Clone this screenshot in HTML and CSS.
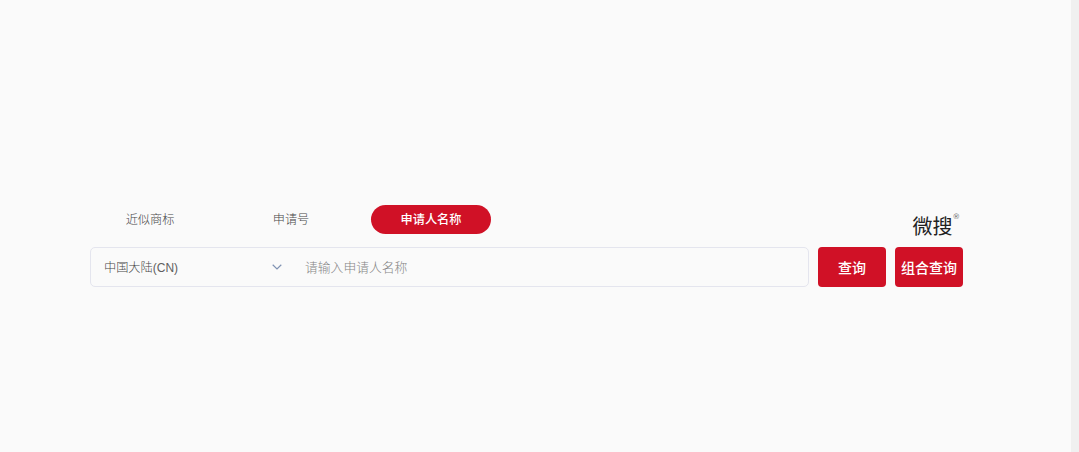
FILE: index.html
```html
<!DOCTYPE html>
<html lang="zh-CN">
<head>
    <meta charset="UTF-8">
    <meta name="viewport" content="width=device-width, initial-scale=1.0">
    <title>微搜</title>
    <link rel="stylesheet" href="styles.css">
</head>
<body>

<div class="page">
    <div class="search">
        <div class="search-top">
            <div class="tabs">
                <div class="tab">近似商标</div>
                <div class="tab">申请号</div>
                <div class="tab active">申请人名称</div>
            </div>
            <div class="logo">微搜<span class="reg">®</span></div>
        </div>

        <div class="search-row">
            <div class="search-box">
                <div class="country">
                    <div>中国大陆<span class="code">(CN)</span></div>
                    <svg class="arrow" width="10" height="6" viewBox="0 0 10 6">
                        <path d="M0.7 0.7L5 4.9L9.3 0.7" fill="none" stroke="#8093b3" stroke-width="1.2"/>
                    </svg>
                </div>
                <input class="keyword" type="text" placeholder="请输入申请人名称">
            </div>
            <button class="btn">查询</button>
            <button class="btn">组合查询</button>
        </div>
    </div>
    <div class="scrollbar"></div>
</div>

</body>
</html>
```

FILE: styles.css
```css
* {
    box-sizing: border-box;
}

body {
    margin: 0;
    font-family: "Liberation Sans", "Noto Sans CJK SC", sans-serif;
    font-weight: 300;
    background-color: #fafafa;
}

.page {
    display: flex;
    justify-content: space-between;
    height: 100vh;
    overflow: hidden;
}

.search {
    width: 873px;
    margin-left: 90px;
    padding-top: 205px;
}

.scrollbar {
    width: 8px;
    background-color: #f0f0f0;
}

.search-top {
    display: flex;
    justify-content: space-between;
    height: 42px;
}

.tabs {
    display: flex;
    gap: 20px;
    padding-left: 1px;
}

.tab {
    width: 120px;
    height: 28.5px;
    line-height: 30px;
    border-radius: 15px;
    font-size: 12.2px;
    color: #484848;
    text-align: center;
}

.tab:first-child {
    padding-right: 2px;
}

.tab.active {
    background-color: #d01126;
    color: #fff;
    font-weight: 500;
}

.logo {
    display: flex;
    align-items: flex-start;
    padding-right: 3px;
    font-size: 20px;
    font-weight: 400;
    line-height: 44px;
    color: #222;
}

.reg {
    font-family: "DejaVu Sans", sans-serif;
    font-size: 7.5px;
    line-height: 24px;
    color: #666;
}

.search-row {
    display: flex;
    height: 40px;
}

.search-box {
    display: flex;
    width: 719px;
    margin-right: 9px;
    border: 1px solid #e4e5ee;
    border-radius: 5px;
}

.country {
    display: flex;
    align-items: center;
    justify-content: space-between;
    width: 191px;
    padding-left: 13px;
    font-size: 12.2px;
    color: #484848;
}

.code {
    font-size: 12px;
    color: #606060;
}

.keyword {
    flex: 1;
    padding: 0 0 0 23px;
    border: none;
    outline: none;
    background: transparent;
    font-family: inherit;
    font-size: 12.8px;
    font-weight: 300;
}

.keyword::placeholder {
    color: #858585;
}

.btn {
    width: 68px;
    padding: 0;
    border: none;
    border-radius: 4px;
    background-color: #d01126;
    color: #fff;
    font-family: inherit;
    font-size: 14px;
    font-weight: 500;
    cursor: pointer;
}

.btn + .btn {
    margin-left: 9px;
}
```
